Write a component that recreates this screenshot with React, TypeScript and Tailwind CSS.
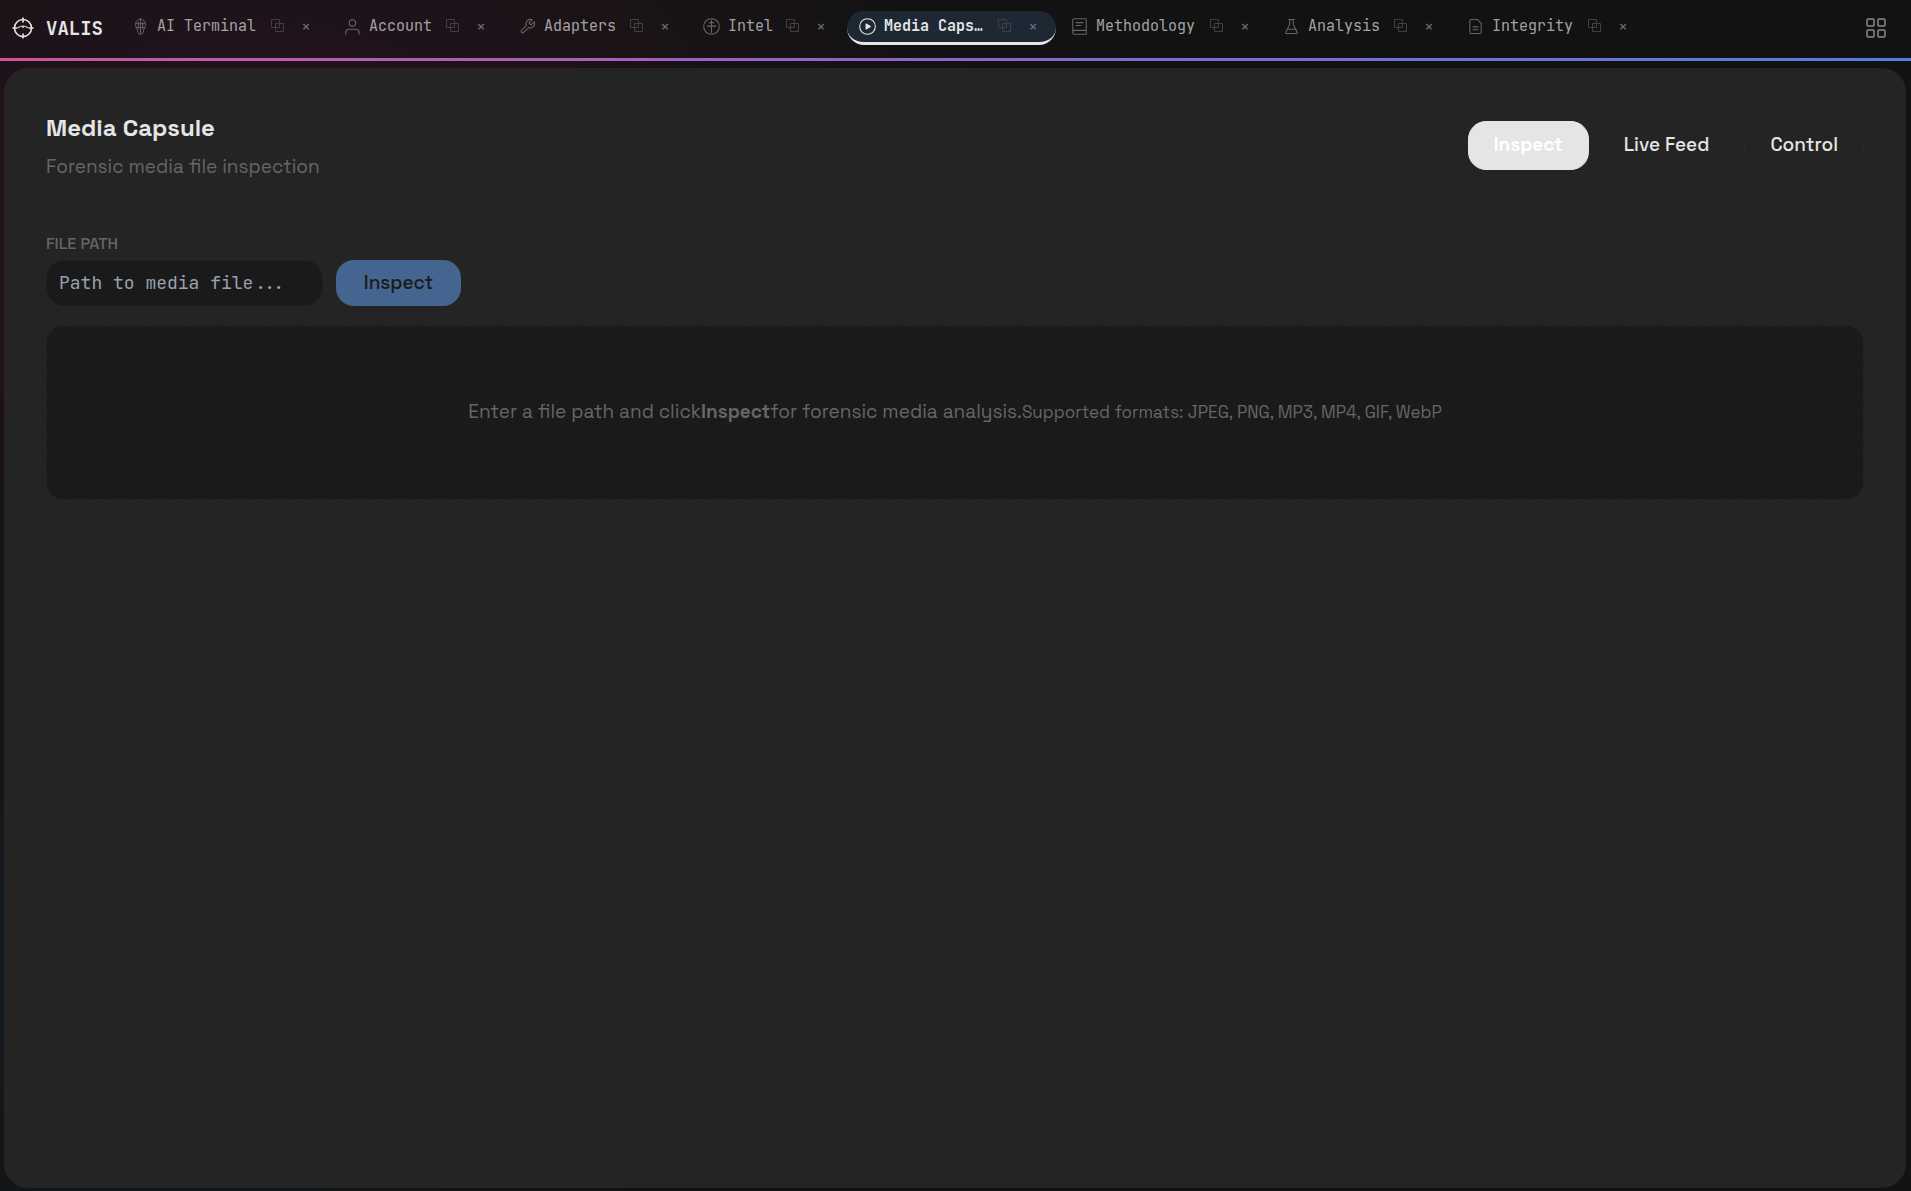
import { useState } from 'react';
import type { ReactNode } from 'react';

const sans = 'font-["Space_Grotesk","Inter",sans-serif]';
const mono = 'font-["JetBrains_Mono","DejaVu_Sans_Mono",monospace]';

function Glyph({ children }: { children: ReactNode }) {
  return (
    <svg width="17" height="17" viewBox="0 0 24 24" fill="none" stroke="currentColor" strokeWidth="1.5" strokeLinecap="round" strokeLinejoin="round" className="shrink-0" aria-hidden="true">
      {children}
    </svg>
  );
}

const tabs = [
  {
    id: 'terminal',
    label: 'AI Terminal',
    width: 'w-[102px]',
    icon: <Glyph><path d="M12 1.500c-4 0-7 3-7 7.500 0 3.500 1.500 6 3 8v3a3 3 0 0 0 3 2.500h2a3 3 0 0 0 3-2.500v-3c1.500-2 3-4.500 3-8 0-4.500-3-7.500-7-7.500zM12 1.500v21M9 6v8.500M15 6v8.500M5.500 8h13M6 13.500h12" strokeWidth="1.300" /></Glyph>,
  },
  {
    id: 'account',
    label: 'Account',
    width: 'w-[65px]',
    icon: <Glyph><circle cx="12" cy="7" r="4.500" /><path d="M2.500 23v-2a5 5 0 0 1 5-5h9a5 5 0 0 1 5 5v2" /></Glyph>,
  },
  {
    id: 'adapters',
    label: 'Adapters',
    width: 'w-[74px]',
    icon: <Glyph><path d="M14.700 6.300a1 1 0 0 0 0 1.400l1.600 1.600a1 1 0 0 0 1.400 0l3.770-3.770a6 6 0 0 1-7.940 7.940l-6.910 6.910a2.120 2.120 0 0 1-3-3l6.910-6.910a6 6 0 0 1 7.940-7.940l-3.760 3.760z" /></Glyph>,
  },
  {
    id: 'intel',
    label: 'Intel',
    width: 'w-[46px]',
    icon: <Glyph><circle cx="12" cy="12" r="11" /><path d="M12 3.500v17M6 11.500h12M9 7c1-1.200 5-1.200 6 0" /></Glyph>,
  },
  {
    id: 'media',
    label: 'Media Caps…',
    width: 'w-[102px]',
    icon: <Glyph><circle cx="12" cy="12" r="11" /><path d="M10 8.500l6 3.500-6 3.500z" fill="currentColor" /></Glyph>,
  },
  {
    id: 'methodology',
    label: 'Methodology',
    width: 'w-[102px]',
    icon: <Glyph><path d="M2.500 20V3.500A2.500 2.500 0 0 1 5 1h16.500v22H5a2.500 2.500 0 0 1-2.500-3 2.500 2.500 0 0 1 2.500-2.500h16.500M7 6.500h10M7 10.500h7" /></Glyph>,
  },
  {
    id: 'analysis',
    label: 'Analysis',
    width: 'w-[74px]',
    icon: <Glyph><path d="M8 2h8M9.500 2v7L4 20a1.500 1.500 0 0 0 1.300 2h13.400a1.500 1.500 0 0 0 1.300-2L14.500 9V2M6.500 16h11" /></Glyph>,
  },
  {
    id: 'integrity',
    label: 'Integrity',
    width: 'w-[84px]',
    icon: <Glyph><path d="M14.500 2H6a2 2 0 0 0-2 2v16a2 2 0 0 0 2 2h12a2 2 0 0 0 2-2V7.500zM8.500 12.500h7M8.500 16.500h7" /></Glyph>,
  },
];

const views = ['Inspect', 'Live Feed', 'Control'];

function Logo() {
  return (
    <svg width="22" height="22" viewBox="0 0 22 22" fill="none" stroke="currentColor" strokeWidth="1.600" strokeLinecap="round" className="shrink-0" aria-hidden="true">
      <circle cx="11" cy="11" r="8.500" />
      <path d="M11 1v4M11 17v4M1 11h4M17 11h4" />
      <path d="M6.500 10.500c2.500-2 6.500-2 9 0" strokeWidth="1.200" />
      <circle cx="11" cy="10" r="1" fill="currentColor" stroke="none" />
    </svg>
  );
}

export default function App() {
  const [activeTab, setActiveTab] = useState('media');
  const [view, setView] = useState('Inspect');
  const [path, setPath] = useState('');

  return (
    <div className={`${sans} flex min-h-screen flex-col bg-[#121212] bg-[radial-gradient(ellipse_45%_55%_at_14%_18%,#26131f_0%,transparent_85%),radial-gradient(ellipse_40%_35%_at_0%_80%,#121a20_0%,transparent_100%)] text-[#e5e5e5]`}>
      <header className={`${mono} flex h-[58px] items-center pr-[25px] pb-[2px] pl-3`}>
        <div className="flex w-[108px] shrink-0 items-center gap-3">
          <Logo />
          <span className="pt-[2px] text-[19px] font-bold">VALIS</span>
        </div>

        <nav className="flex flex-1 gap-[3px]">
          {tabs.map(tab => {
            const active = tab.id === activeTab;
            return (
              <div key={tab.id} className={`flex h-[34px] items-center rounded-[17px] border-b-[3px] pr-[9px] pl-3 ${active ? 'border-[#e5e5e5] bg-[#1e2835]' : 'border-transparent'}`}>
                <button onClick={() => setActiveTab(tab.id)} className={`flex items-center gap-2 text-[15px] ${active ? 'font-bold text-[#e5e5e5]' : 'text-[#a3a3a3]'}`}>
                  <span className={active ? '' : 'text-[#666]'}>{tab.icon}</span>
                  <span className={`${tab.width} pb-[2px] text-left leading-5 whitespace-nowrap`}>{tab.label}</span>
                </button>
                <button aria-label={`Duplicate ${tab.label}`} className="ml-[5px] flex w-7 justify-center pb-[2px] text-[#404040]">
                  <svg width="14" height="14" viewBox="0 0 14 14" fill="none" stroke="currentColor" aria-hidden="true">
                    <path d="M.5.5h8v8h-8zM4.500 4.500h8v8h-8z" />
                  </svg>
                </button>
                <button aria-label={`Close ${tab.label}`} className="w-7 text-base leading-5 text-[#737373]">×</button>
              </div>
            );
          })}
        </nav>

        <button aria-label="All apps" className="text-[#8c8c8c]">
          <svg width="20" height="20" viewBox="0 0 20 20" fill="none" stroke="currentColor" strokeWidth="1.500" aria-hidden="true">
            <rect x="1" y="1" width="7" height="7" rx="1" />
            <rect x="12" y="1" width="7" height="7" rx="1" />
            <rect x="1" y="12" width="7" height="7" rx="1" />
            <rect x="12" y="12" width="7" height="7" rx="1" />
          </svg>
        </button>
      </header>

      <div className="h-[3px] bg-linear-to-r from-[#cb559d] via-[#8a65cb] to-[#4f80d8]" />

      <main className="mt-[7px] mr-[5px] mb-[3px] ml-1 flex-1 rounded-3xl bg-[#242424] px-[42px] pt-[42px]">
        <div className="flex items-start justify-between border-b border-[#272727] pb-6">
          <div>
            <h1 className="text-2xl leading-9 font-bold">Media Capsule</h1>
            <p className="mt-[5px] text-[19px] leading-8 text-[#666]">Forensic media file inspection</p>
          </div>
          <div className="mt-[11px] flex gap-[9px]">
            {views.map(name => (
              <button
                key={name}
                onClick={() => setView(name)}
                className={`h-[49px] rounded-[18px] border px-[25px] text-[19px] ${name === view ? 'border-[#e5e5e5] bg-[#e5e5e5] font-semibold text-white' : 'border-[#282828] font-medium'}`}
              >
                {name}
              </button>
            ))}
          </div>
        </div>

        <div className="mt-[26px] flex items-end gap-[13px]">
          <div className="flex flex-col">
            <label htmlFor="file-path" className="pb-[6px] text-base leading-5 font-medium text-[#666]">FILE PATH</label>
            <input
              id="file-path"
              value={path}
              onChange={e => setPath(e.target.value)}
              placeholder="Path to media file..."
              className={`${mono} h-[46px] w-[277px] rounded-[18px] border border-[#202020] bg-[#1a1a1a] px-3 pb-[2px] text-lg placeholder:text-[#99a1af]`}
            />
          </div>
          <button className="h-[46px] w-[125px] rounded-[18px] bg-[#44658f] text-[19px] font-medium text-[#1a1a1a]">Inspect</button>
        </div>

        <div className="mt-[19px] flex h-[175px] items-center justify-center rounded-[18px] border border-dashed border-[#272727] bg-[#1a1a1a] text-[19px] text-[#666]">
          Enter a file path and click
          <strong className="font-bold">Inspect</strong>
          for forensic media analysis.
          <span className="text-[17px]">Supported formats: JPEG, PNG, MP3, MP4, GIF, WebP</span>
        </div>
      </main>
    </div>
  );
}
